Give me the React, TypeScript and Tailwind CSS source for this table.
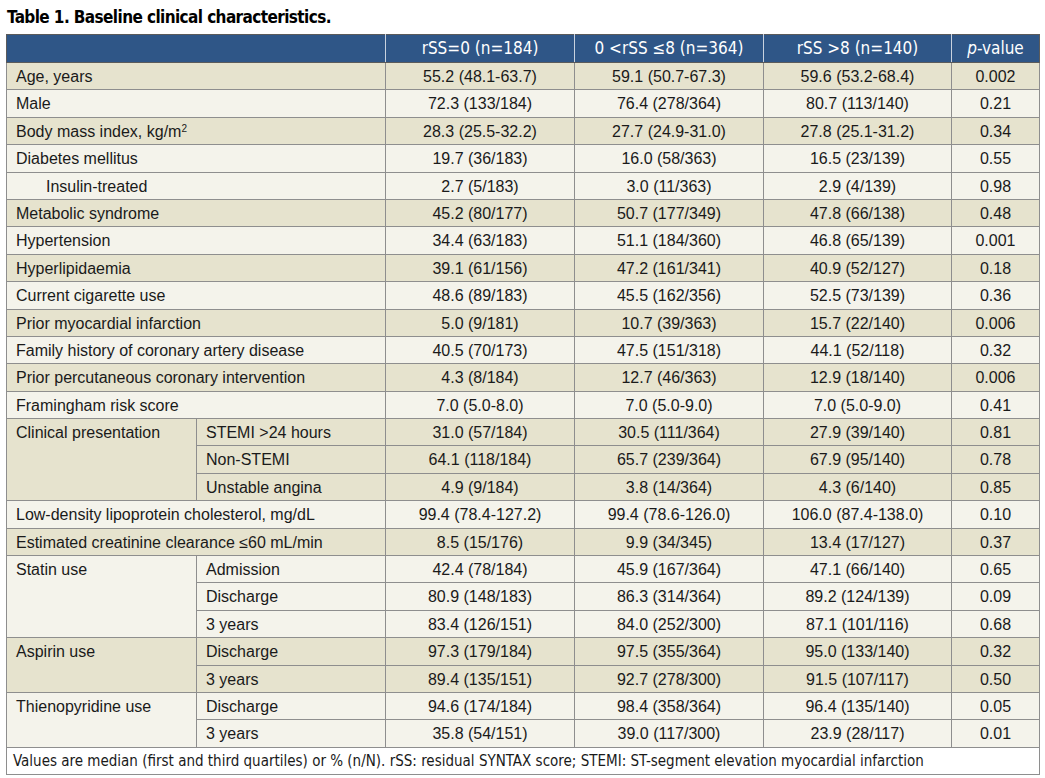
import React from 'react';

type Row = {
  label?: string;
  sub?: string;
  span?: number;
  indent?: boolean;
  sup?: boolean;
  values: [string, string, string, string];
  dark: boolean;
};

const rows: Row[] = [
  { label: 'Age, years', values: ['55.2 (48.1-63.7)', '59.1 (50.7-67.3)', '59.6 (53.2-68.4)', '0.002'], dark: true },
  { label: 'Male', values: ['72.3 (133/184)', '76.4 (278/364)', '80.7 (113/140)', '0.21'], dark: false },
  { label: 'Body mass index, kg/m', sup: true, values: ['28.3 (25.5-32.2)', '27.7 (24.9-31.0)', '27.8 (25.1-31.2)', '0.34'], dark: true },
  { label: 'Diabetes mellitus', values: ['19.7 (36/183)', '16.0 (58/363)', '16.5 (23/139)', '0.55'], dark: false },
  { label: 'Insulin-treated', indent: true, values: ['2.7 (5/183)', '3.0 (11/363)', '2.9 (4/139)', '0.98'], dark: false },
  { label: 'Metabolic syndrome', values: ['45.2 (80/177)', '50.7 (177/349)', '47.8 (66/138)', '0.48'], dark: true },
  { label: 'Hypertension', values: ['34.4 (63/183)', '51.1 (184/360)', '46.8 (65/139)', '0.001'], dark: false },
  { label: 'Hyperlipidaemia', values: ['39.1 (61/156)', '47.2 (161/341)', '40.9 (52/127)', '0.18'], dark: true },
  { label: 'Current cigarette use', values: ['48.6 (89/183)', '45.5 (162/356)', '52.5 (73/139)', '0.36'], dark: false },
  { label: 'Prior myocardial infarction', values: ['5.0 (9/181)', '10.7 (39/363)', '15.7 (22/140)', '0.006'], dark: true },
  { label: 'Family history of coronary artery disease', values: ['40.5 (70/173)', '47.5 (151/318)', '44.1 (52/118)', '0.32'], dark: false },
  { label: 'Prior percutaneous coronary intervention', values: ['4.3 (8/184)', '12.7 (46/363)', '12.9 (18/140)', '0.006'], dark: true },
  { label: 'Framingham risk score', values: ['7.0 (5.0-8.0)', '7.0 (5.0-9.0)', '7.0 (5.0-9.0)', '0.41'], dark: false },
  { label: 'Clinical presentation', span: 3, sub: 'STEMI >24 hours', values: ['31.0 (57/184)', '30.5 (111/364)', '27.9 (39/140)', '0.81'], dark: true },
  { sub: 'Non-STEMI', values: ['64.1 (118/184)', '65.7 (239/364)', '67.9 (95/140)', '0.78'], dark: true },
  { sub: 'Unstable angina', values: ['4.9 (9/184)', '3.8 (14/364)', '4.3 (6/140)', '0.85'], dark: true },
  { label: 'Low-density lipoprotein cholesterol, mg/dL', values: ['99.4 (78.4-127.2)', '99.4 (78.6-126.0)', '106.0 (87.4-138.0)', '0.10'], dark: false },
  { label: 'Estimated creatinine clearance \u226460 mL/min', values: ['8.5 (15/176)', '9.9 (34/345)', '13.4 (17/127)', '0.37'], dark: true },
  { label: 'Statin use', span: 3, sub: 'Admission', values: ['42.4 (78/184)', '45.9 (167/364)', '47.1 (66/140)', '0.65'], dark: false },
  { sub: 'Discharge', values: ['80.9 (148/183)', '86.3 (314/364)', '89.2 (124/139)', '0.09'], dark: false },
  { sub: '3 years', values: ['83.4 (126/151)', '84.0 (252/300)', '87.1 (101/116)', '0.68'], dark: false },
  { label: 'Aspirin use', span: 2, sub: 'Discharge', values: ['97.3 (179/184)', '97.5 (355/364)', '95.0 (133/140)', '0.32'], dark: true },
  { sub: '3 years', values: ['89.4 (135/151)', '92.7 (278/300)', '91.5 (107/117)', '0.50'], dark: true },
  { label: 'Thienopyridine use', span: 2, sub: 'Discharge', values: ['94.6 (174/184)', '98.4 (358/364)', '96.4 (135/140)', '0.05'], dark: false },
  { sub: '3 years', values: ['35.8 (54/151)', '39.0 (117/300)', '23.9 (28/117)', '0.01'], dark: false },
];

const cell = 'border border-[#8e8e8e] px-[9px] py-0 align-top pt-[2px]';

export default function App() {
  return (
    <div className="bg-white w-[1045px] h-[778px] font-['Liberation_Sans',Arial,sans-serif] text-[16px] text-[#1a1a1a]">
      <div className="px-[7px] pt-[5px] h-[34px] font-['DejaVu_Sans_Condensed','Liberation_Sans_Narrow',sans-serif] font-bold text-[17px] text-black tracking-[-0.6px]">
        Table 1. Baseline clinical characteristics.
      </div>
      <table className="ml-[6px] w-[1033px] table-fixed border-collapse">
        <colgroup>
          <col className="w-[190px]" />
          <col className="w-[189px]" />
          <col className="w-[189px]" />
          <col className="w-[189px]" />
          <col className="w-[188px]" />
          <col className="w-[88px]" />
        </colgroup>
        <thead>
          <tr className="h-[28px] bg-[#2f5687] text-white font-['DejaVu_Sans_Condensed','Liberation_Sans_Narrow',sans-serif] text-[17px]">
            <th colSpan={2} className="border border-[#5b5b5b] border-r-[#c9d2df]"></th>
            <th className="border border-[#5b5b5b] border-x-[#c9d2df] font-normal">rSS=0 (n=184)</th>
            <th className="border border-[#5b5b5b] border-x-[#c9d2df] font-normal">0 &lt;rSS &le;8 (n=364)</th>
            <th className="border border-[#5b5b5b] border-x-[#c9d2df] font-normal">rSS &gt;8 (n=140)</th>
            <th className="border border-[#5b5b5b] border-l-[#c9d2df] font-normal">
              <i>p</i>-value
            </th>
          </tr>
        </thead>
        <tbody>
          {rows.map((r, i) => (
            <tr key={i} className={`h-[27.4px] ${r.dark ? 'bg-[#e6e3ce]' : 'bg-[#f4f3eb]'}`}>
              {r.label !== undefined && !r.sub && (
                <td colSpan={2} className={`${cell} ${r.indent ? 'pl-[39px]' : ''}`}>
                  {r.label}
                  {r.sup && <sup className="text-[10px]">2</sup>}
                </td>
              )}
              {r.label !== undefined && r.sub && (
                <td rowSpan={r.span} className={cell}>
                  {r.label}
                </td>
              )}
              {r.sub && <td className={cell}>{r.sub}</td>}
              {r.values.map((v, j) => (
                <td key={j} className={`${cell} text-center`}>
                  {v}
                </td>
              ))}
            </tr>
          ))}
          <tr className="h-[27px] bg-white">
            <td
              colSpan={6}
              className="border border-[#8e8e8e] px-[6px] font-['DejaVu_Sans_Condensed','Liberation_Sans_Narrow',sans-serif] text-[15px]"
            >
              Values are median (first and third quartiles) or % (n/N). rSS: residual SYNTAX score; STEMI: ST-segment elevation myocardial infarction
            </td>
          </tr>
        </tbody>
      </table>
    </div>
  );
}
